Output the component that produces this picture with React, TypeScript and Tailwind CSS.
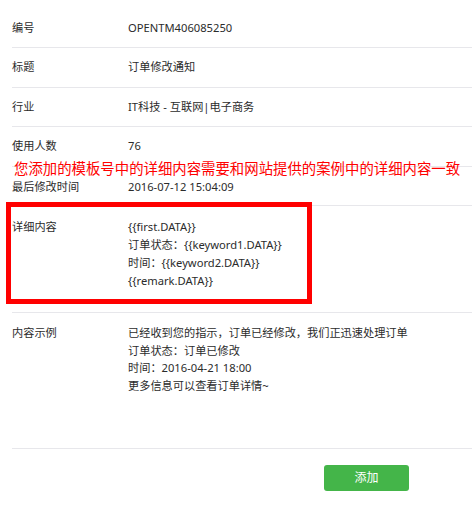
import React from "react";

const font = { fontFamily: '"Noto Sans", "Noto Sans CJK SC", sans-serif' };

function Row({ label, children, className }: { label: string; children: React.ReactNode; className: string }) {
  return (
    <div className={`flex border-b border-[#e7e7eb] ${className}`}>
      <div className="w-[116px] shrink-0">{label}</div>
      <div>{children}</div>
    </div>
  );
}

export default function App() {
  return (
    <div className="relative w-[472px] h-[511px] bg-white text-[11.2px] text-[#2b2b2b] overflow-hidden" style={font}>
      <div className="pl-[12px] pt-[8.5px] leading-[18px]">
        <Row label="编号" className="h-[39.5px] items-center">OPENTM406085250</Row>
        <Row label="标题" className="h-[39.5px] items-center">订单修改通知</Row>
        <Row label="行业" className="h-[39.5px] items-center">IT科技 - 互联网|电子商务</Row>
        <Row label="使用人数" className="h-[39.5px] items-center">76</Row>
        <Row label="最后修改时间" className="h-[39.5px] items-center pt-[2px] leading-[14px]">2016-07-12 15:04:09</Row>
        <Row label="详细内容" className="pt-[12px] pb-[22px]">
          <div>{"{{first.DATA}}"}</div>
          <div>订单状态：{"{{keyword1.DATA}}"}</div>
          <div>时间：{"{{keyword2.DATA}}"}</div>
          <div>{"{{remark.DATA}}"}</div>
        </Row>
        <Row label="内容示例" className="pt-[11px] pb-[53px] leading-[17.7px]">
          <div>已经收到您的指示，订单已经修改，我们正迅速处理订单</div>
          <div>订单状态：订单已修改</div>
          <div>时间：2016-04-21 18:00</div>
          <div>更多信息可以查看订单详情~</div>
        </Row>
        <div className="pt-[16px] pl-[312px]">
          <button className="w-[85px] h-[26px] rounded-[3px] bg-[#44b549] text-white text-[12px] flex items-center justify-center">
            添加
          </button>
        </div>
      </div>
      <div className="absolute left-[14px] top-[161px] text-[14.4px] leading-[16px] text-[#f00] whitespace-nowrap">
        您添加的模板号中的详细内容需要和网站提供的案例中的详细内容一致
      </div>
      <div className="absolute left-[6px] top-[202px] w-[306px] h-[102px] border-[5px] border-[#f00]" />
    </div>
  );
}
